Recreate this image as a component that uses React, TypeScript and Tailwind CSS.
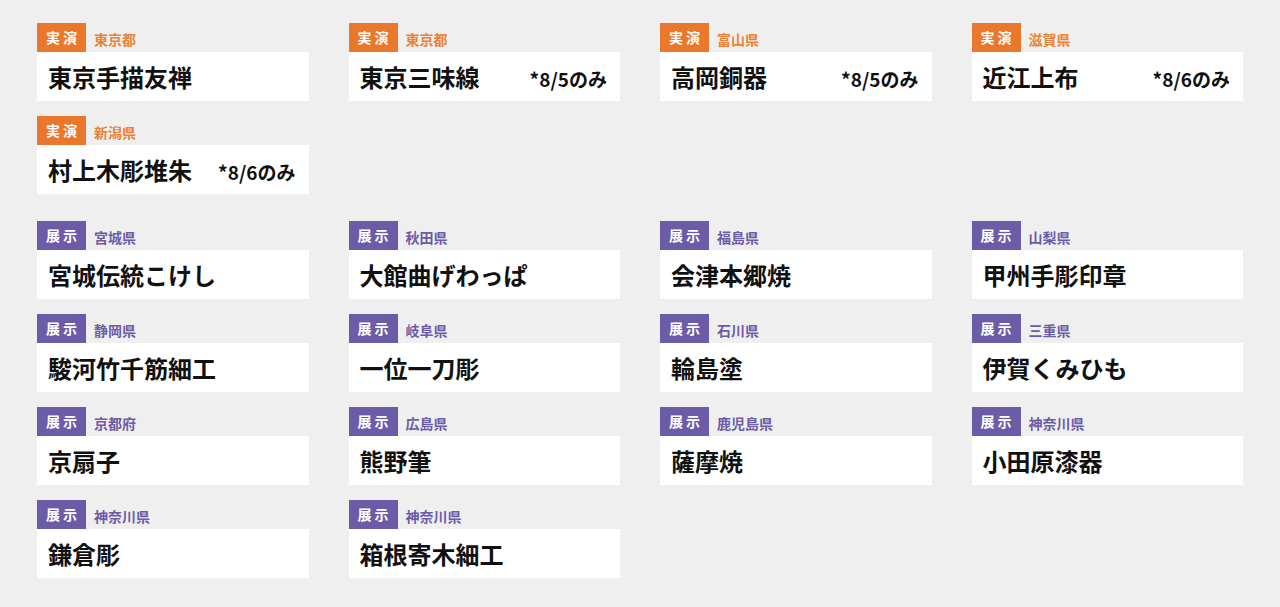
import React from "react";

type Item = { kind: "jitsuen" | "tenji"; pref: string; name: string; note?: string };

const group1: Item[] = [
  { kind: "jitsuen", pref: "東京都", name: "東京手描友禅" },
  { kind: "jitsuen", pref: "東京都", name: "東京三味線", note: "*8/5のみ" },
  { kind: "jitsuen", pref: "富山県", name: "高岡銅器", note: "*8/5のみ" },
  { kind: "jitsuen", pref: "滋賀県", name: "近江上布", note: "*8/6のみ" },
  { kind: "jitsuen", pref: "新潟県", name: "村上木彫堆朱", note: "*8/6のみ" },
];

const group2: Item[] = [
  { kind: "tenji", pref: "宮城県", name: "宮城伝統こけし" },
  { kind: "tenji", pref: "秋田県", name: "大館曲げわっぱ" },
  { kind: "tenji", pref: "福島県", name: "会津本郷焼" },
  { kind: "tenji", pref: "山梨県", name: "甲州手彫印章" },
  { kind: "tenji", pref: "静岡県", name: "駿河竹千筋細工" },
  { kind: "tenji", pref: "岐阜県", name: "一位一刀彫" },
  { kind: "tenji", pref: "石川県", name: "輪島塗" },
  { kind: "tenji", pref: "三重県", name: "伊賀くみひも" },
  { kind: "tenji", pref: "京都府", name: "京扇子" },
  { kind: "tenji", pref: "広島県", name: "熊野筆" },
  { kind: "tenji", pref: "鹿児島県", name: "薩摩焼" },
  { kind: "tenji", pref: "神奈川県", name: "小田原漆器" },
  { kind: "tenji", pref: "神奈川県", name: "鎌倉彫" },
  { kind: "tenji", pref: "神奈川県", name: "箱根寄木細工" },
];

function Card({ item }: { item: Item }) {
  const isJ = item.kind === "jitsuen";
  return (
    <div className="flex flex-col">
      <div className="flex items-end h-[29px]">
        <div
          className={
            "w-[49px] h-[29px] flex items-center justify-center text-white text-[14px] font-bold tracking-[0.22em] pl-[3px] " +
            (isJ ? "bg-[#e9782d]" : "bg-[#6c5ba7]")
          }
        >
          {isJ ? "実演" : "展示"}
        </div>
        <span
          className={
            "ml-[8px] mb-[6px] text-[14px] font-bold leading-none " +
            (isJ ? "text-[#ea8237]" : "text-[#6c5ba7]")
          }
        >
          {item.pref}
        </span>
      </div>
      <div className="bg-white h-[49px] flex items-center justify-between pl-[11px] pr-[13px]">
        <span className="text-[24px] font-bold text-[#111] leading-none">{item.name}</span>
        {item.note && (
          <span className="text-[19px] font-semibold text-[#111] leading-none mt-[4px]">{item.note}</span>
        )}
      </div>
    </div>
  );
}

export default function App() {
  return (
    <div
      className="w-[1280px] h-[607px] bg-[#efefef] px-[37px] pt-[23px] overflow-hidden"
      style={{ fontFamily: '"Noto Sans CJK JP", "Noto Sans", sans-serif' }}
    >
      <div className="grid grid-cols-4 gap-x-[40px] gap-y-[15px]">
        {group1.map((it, i) => (
          <Card key={i} item={it} />
        ))}
      </div>
      <div className="grid grid-cols-4 gap-x-[40px] gap-y-[15px] mt-[27px]">
        {group2.map((it, i) => (
          <Card key={i} item={it} />
        ))}
      </div>
    </div>
  );
}
